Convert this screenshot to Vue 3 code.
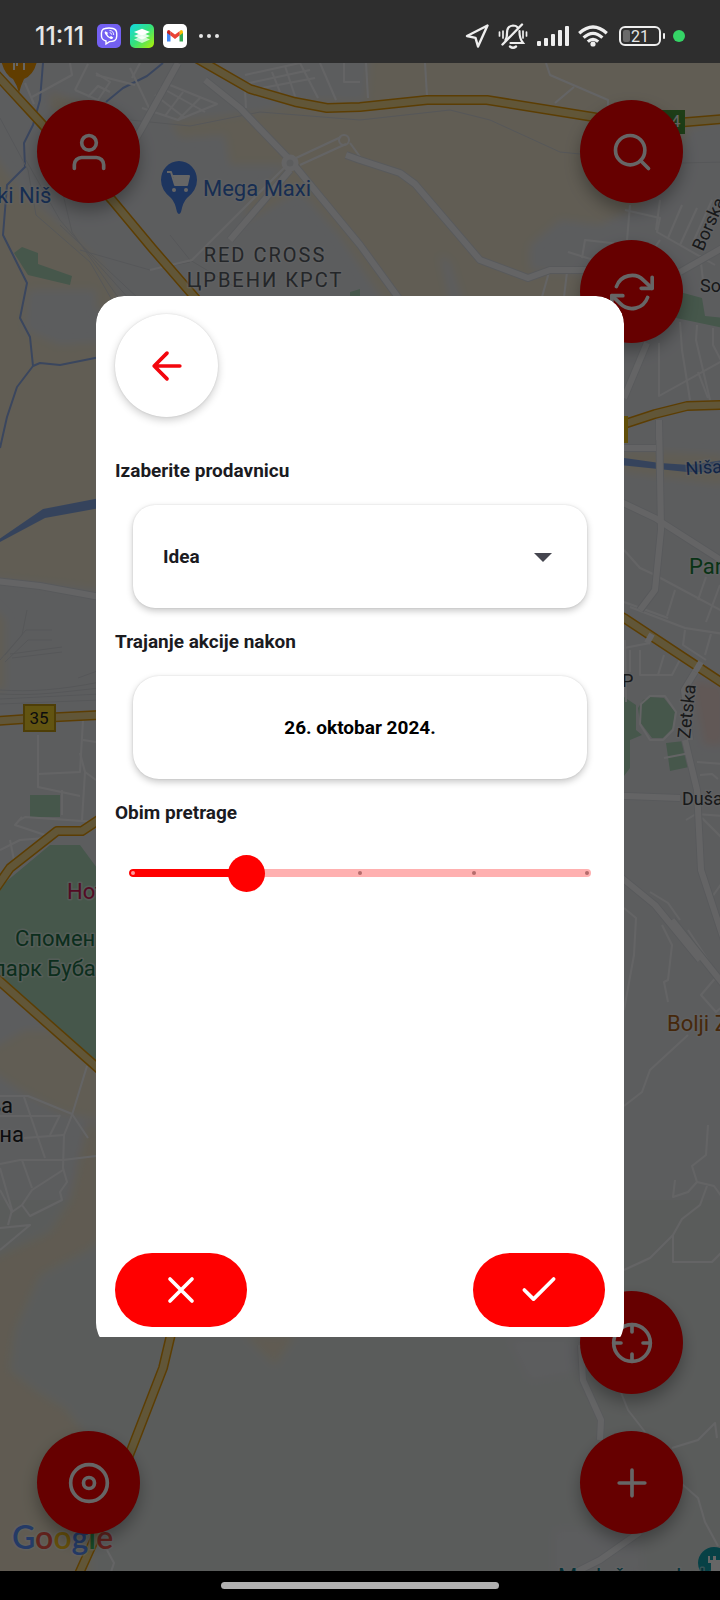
<script setup>
import { computed, ref } from 'vue'

const store = ref('Idea')
const stores = ['Idea', 'Mega Maxi', 'Roda', 'Lidl']
const range = ref(1)
const steps = 4
const fill = computed(() => ({ width: `${(range.value / steps) * 100}%` }))

const highways = [
  'M-6 72L42 124L112 200L152 248L204 308',
  'M196 58L250 89L295 102L327 108L360 107L427 100L487 100L593 117L640 126L687 122L724 119',
  'M600 432L655 414L687 406L724 405',
  'M-4 721L40 718L100 715',
  'M-4 888L10 868L57 831L82 831L100 819',
  'M-4 978L100 1070',
  'M172 1330L163 1368L132 1448L96 1536L78 1576',
]

const roads = [
  'M178 63L142 128L118 170',
  'M205 80L240 108L290 160L360 245L400 300',
  'M290 170L230 240',
  'M346 155L360 160L400 173L415 184L480 260L528 278L550 270L590 270',
  'M647 343L624 398',
  'M640 610L655 590L661 530L659 420',
  'M600 448L656 448',
  'M600 492L655 518L724 562',
  'M-4 581L40 586L100 597',
  'M600 795L680 798',
  'M685 740L697 790L701 870L724 940',
  'M695 672L684 690L690 740',
  'M600 860L655 905L700 960',
  'M672 920L724 985',
  'M581 1345L583 1380L601 1420L600 1440',
  'M640 1532L600 1560L570 1575',
  'M680 272L724 247',
]

const streets = [
  'M32 97L72 75L70 63', 'M25 83L34 104', 'M75 90L98 100L110 82L96 73', 'M88 64L75 90', 'M96 75L135 85', 'M88 97L98 86L110 92',
  'M130 68L150 110', 'M132 78L140 63', 'M165 83L217 104L178 120L142 108', 'M183 92L165 116', 'M200 98L178 120', 'M155 95L185 118', 'M160 87L205 112',
  'M245 75L300 63', 'M245 84L310 70', 'M262 88L315 78', 'M272 72L280 92', 'M285 66L295 96', 'M300 63L318 98', 'M320 63L336 100', 'M344 63L344 82L360 82', 'M366 63L368 98', 'M245 90L246 108',
  'M296 158L341 137', 'M300 165L346 144', 'M350 143L366 165', 'M284 168L192 260L150 270',
  'M425 63L427 96', 'M546 63L550 75L608 100L608 112', 'M574 87L555 103', 'M625 210L660 218L657 232L715 265', 'M660 200L656 230', 'M682 205L668 238', 'M697 208L680 245', 'M630 205L627 240', 'M712 200L694 240',
  'M582 258L585 240L620 244', 'M568 252L600 262', 'M549 272L542 297', 'M567 272L564 297', 'M700 255L703 280', 'M660 240L645 262',
  'M659 343L659 396L724 360', 'M680 322L682 350L690 400', 'M697 325L696 340L710 400', 'M713 328L713 345L724 366', 'M698 372L708 398',
  'M624 550L640 568L653 574L724 612', 'M675 590L667 616', 'M706 577L698 600', 'M624 602L668 618', 'M630 607L685 628L724 634', 'M720 585L706 622',
  'M685 630L683 645L706 660', 'M711 634L705 655', 'M624 648L650 643', 'M630 650L630 672', 'M640 650L640 675L672 675L684 652', 'M664 655L658 675', 'M625 640L626 702',
  'M697 762L724 764', 'M700 775L712 774L718 779', 'M686 820L696 814L724 816', 'M702 818L724 840', 'M712 897L724 880',
  'M624 908L636 918L634 955L624 1010', 'M662 925L672 945L668 980L664 982L668 1002', 'M688 930L718 975L701 995L716 1012L724 1005', 'M650 892L668 903L680 920',
  'M688 1035L650 1070L642 1092L624 1106', 'M708 1125L706 1155L692 1166L697 1182L714 1186L724 1200', 'M697 1182L688 1192L673 1197L675 1180', 'M707 1186L700 1205L682 1219L673 1235L650 1258L624 1270', 'M673 1235L673 1262L712 1262L724 1250',
  'M620 1390L628 1410L645 1432', 'M672 1448L698 1440L715 1423L717 1438', 'M682 1484L698 1498L705 1522L718 1546', 'M107 1550L114 1563L110 1575',
  'M38 735L38 787L80 796', 'M38 774L80 772L83 720', 'M80 753L85 772L96 780', 'M83 740L96 742', 'M62 790L62 815', 'M85 772L82 820', 'M20 820L25 817L96 822', 'M22 817L15 825L45 835', 'M0 850L20 840L45 838', 'M10 840L14 860',
  'M0 1096L28 1096L72 1114L88 1138', 'M24 1097L45 1158', 'M0 1116L60 1116', 'M60 1115L50 1135', 'M24 1138L64 1135', 'M87 1066L72 1115L64 1135L63 1168L67 1182L60 1192L62 1200L30 1216L22 1205L32 1190L63 1170', 'M0 1164L20 1160L63 1160L96 1156', 'M22 1160L32 1188', 'M0 1168L12 1210L8 1225', 'M0 1190L12 1212L22 1205', 'M0 1250L30 1225L0 1228',
]

const rails = [
  'M0 118L28 170L36 215L90 262L112 300', 'M26 160L60 220L96 262L130 300', 'M62 190L72 232L120 300', 'M80 250L150 270L190 262', 'M60 225L140 300',
  'M0 690C30 692 60 690 100 682', 'M0 694C40 696 60 692 100 688', 'M0 699L100 694', 'M0 704L100 700', 'M27 610L22 635L5 655', 'M0 660L26 630L52 630', 'M5 662L28 640L52 640', 'M10 654L62 647', 'M12 658L62 652', 'M78 678L100 670',
  'M130 120L190 126L260 112L360 120L450 110L490 120L560 152L600 156', 'M682 163L724 162', 'M170 235L190 260L240 290',
]

const fabs = {
  top: [
    { name: 'Pretraga', paths: ['M19 11a8 8 0 1 1-16 0a8 8 0 1 1 16 0', 'M21 21l-4.35-4.35'] },
    { name: 'Osveži', paths: ['M23 4v6h-6', 'M1 20v-6h6', 'M3.51 9a9 9 0 0 1 14.85-3.36L23 10M1 14l4.64 4.36A9 9 0 0 0 20.49 15'] },
  ],
  bottom: [
    { name: 'Moja lokacija', paths: ['M22 12a10 10 0 1 1-20 0a10 10 0 1 1 20 0', 'M22 12h-4M6 12H2M12 6V2M12 22v-4'] },
    { name: 'Dodaj', paths: ['M12 5v14M5 12h14'] },
  ],
}
</script>

<template>
  <div class="screen">
    <header class="status">
      <span class="clock">11:11</span>
      <svg class="app" viewBox="0 0 24 24">
        <rect width="24" height="24" rx="5" fill="#7360f2" />
        <path d="M8 4.5Q12 3.500 16 4.500Q19.500 5.500 19.700 9Q20 12 19.300 14.500Q18 17.600 12.500 17.600L9 20V17Q5 16 4.500 12.500Q4 9 5 6.500Q6 4.900 8 4.500Z" fill="none" stroke="#fff" stroke-width="1.400" />
        <path d="M8.500 7.200Q7 8 8 9.800Q10 13.500 13.800 15Q15.500 15.500 16.200 13.500L14 11.900L12.700 12.900Q10.800 12 10.200 10.100L11.100 9Z" fill="#fff" />
        <path d="M12.500 6.500Q16.500 6.700 16.700 11M12.700 8.600Q14.600 8.800 14.700 10.700" fill="none" stroke="#fff" stroke-width=".9" />
      </svg>
      <svg class="app" viewBox="0 0 24 24">
        <defs>
          <linearGradient id="layers" x1="0" y1="0" x2="1" y2="1">
            <stop offset="0" stop-color="#12d8e6" /><stop offset=".5" stop-color="#35e27a" /><stop offset="1" stop-color="#b4f000" />
          </linearGradient>
        </defs>
        <rect width="24" height="24" rx="5" fill="url(#layers)" />
        <path d="M4 15.500L12 12L20 15.500L12 19Z" fill="#fff" opacity=".7" />
        <path d="M4 12L12 8.500L20 12L12 15.500Z" fill="#fff" opacity=".85" />
        <path d="M4 8L12 4.800L20 8L12 11.500Z" fill="#fff" />
      </svg>
      <svg class="app" viewBox="0 0 24 24">
        <rect width="24" height="24" rx="5" fill="#fff" />
        <path d="M4 8v9.500h3.500V9Z" fill="#4285f4" />
        <path d="M16.500 9v8.500H20V8Z" fill="#34a853" />
        <path d="M4 8Q4 6 6 6L7.500 7.200V11.500L4 8.900Z" fill="#c5221f" />
        <path d="M16.500 7.200L18 6Q20 6 20 8V8.900L16.500 11.500Z" fill="#fbbc04" />
        <path d="M7.500 7.200L12 10.600L16.500 7.200V11.500L12 14.900L7.500 11.500Z" fill="#ea4335" />
      </svg>
      <svg class="dots" viewBox="0 0 22 6" fill="#e6e6e6"><circle cx="3" cy="3" r="2" /><circle cx="11" cy="3" r="2" /><circle cx="19" cy="3" r="2" /></svg>
      <span class="spring"></span>
      <svg class="s24" viewBox="0 0 24 24" fill="none" stroke="#eee" stroke-width="2.400" stroke-linejoin="round"><path d="M22.500 1.500L2 12L10.500 13.800L13 22.500Z" /></svg>
      <svg class="bell" viewBox="0 0 30 26" fill="none" stroke="#eee" stroke-width="2.200" stroke-linecap="round">
        <path d="M7.500 17Q9 15 9 10Q9 3 15 2.500Q18 2.500 19.500 4.200M21.500 8Q21.200 15 25 20H12.500" />
        <path d="M24 1.500L4.500 21.500M12 23.500Q15 26 18 23.500" stroke-width="2.400" />
        <path d="M1.500 9v4M5 8v7M28.500 9v4M25 8v7" stroke-width="1.700" />
      </svg>
      <svg class="signal" viewBox="0 0 32 22" fill="#eee">
        <rect y="16" width="4" height="5" rx="1" /><rect x="7" y="13" width="4" height="8" rx="1" /><rect x="14" y="9" width="4" height="12" rx="1" /><rect x="21" y="5" width="4" height="16" rx="1" /><rect x="28" y="1" width="4" height="20" rx="1" />
      </svg>
      <svg class="wifi" viewBox="0 0 30 22" fill="none" stroke="#eee" stroke-width="3.200">
        <path d="M1.200 8.200Q15-4.200 28.800 8.200M5.600 12.600Q15 4 24.400 12.600M9.800 16.600Q15 12 20.200 16.600" /><circle cx="15" cy="19" r="2.600" fill="#eee" stroke="none" />
      </svg>
      <span class="battery"><span class="level"></span>21<span class="tip"></span></span>
      <span class="live"></span>
    </header>

    <main class="stage">
      <svg class="map" viewBox="0 63 720 1508" preserveAspectRatio="xMidYMin slice">
        <defs><filter id="soft" x="-5%" y="-5%" width="110%" height="110%"><feGaussianBlur stdDeviation="4" /></filter></defs>
        <rect y="63" width="720" height="1508" fill="#e6e8ec" />
        <rect y="1200" width="720" height="371" fill="#e2e6e4" />
        <g filter="url(#soft)">
          <path d="M370 50H740V118L690 128L680 150L640 205L600 225L560 220L530 245L530 270L590 275L600 310H390L340 235L300 190L245 222L250 200L290 165L230 165L225 135L180 138L170 122L260 112L310 100L366 102Z" fill="#f2e8d2" />
          <path d="M440 255L450 262L465 310H452Z" fill="#e6e8ec" />
          <path d="M-10 150L20 190L60 225L100 262L125 310H96V290H28L25 330L60 345L100 342V590L-10 578Z" fill="#f2e8d2" />
          <path d="M50 92L120 115L120 140L50 110Z" fill="#efe4cd" />
          <path d="M25 1030L60 1030L100 1068V1120L60 1112L20 1090L-10 1070V1050Z" fill="#f2e8d2" />
          <path d="M88 1120L100 1130V1240L88 1250L40 1275L15 1330L10 1370L35 1390L65 1408L90 1440L90 1580H-10V1260L50 1232L70 1200Z" fill="#efe4cd" />
          <path d="M-10 605L5 620V690H-10Z" fill="#f2e8d2" />
          <path d="M245 1335H295L275 1365Z" fill="#efe4cd" />
          <path d="M624 450L724 455V485L624 472Z" fill="#f2e8d2" />
          <path d="M510 1340H590L585 1370L530 1380Z" fill="#e6e8ec" />
          <path d="M555 1530H640V1575H555Z" fill="#e6e8ec" />
          <path d="M692 680L724 685V745H704Z" fill="#f3dcd6" />
        </g>
        <g fill="#aed9bb">
          <path d="M14 253L22 247L38 253V264L72 276L70 285L28 275Z" />
          <path d="M-4 890L50 845H80L100 872V1068L-4 976Z" />
          <path d="M30 795H60V817H30Z" />
          <path d="M350 292L360 289V298H350ZM680 292L702 298L705 316L724 318V328L676 318Z" />
          <path d="M643 700L650 697L664 698L675 712L673 728L663 738H652L640 722L638 708Z" />
          <path d="M624 697L636 705V730L642 735L630 740V768L624 776Z" />
          <path d="M666 743L684 741L689 767L670 771Z" />
        </g>
        <g fill="none" stroke="#91aeea" stroke-width="2">
          <path d="M163 63L147 76L123 88L106 102" /><path d="M43 63L40 100L33 125L24 143L25 167L7 185L3 235L13 255L27 283L20 318L30 337L33 366L17 387L7 417L0 448" /><path d="M33 366L40 363L60 365L100 357" />
        </g>
        <path d="M-2 540L43 509L100 498V508L45 518L-2 543Z" fill="#86a9e6" />
        <path d="M610 456L660 463L690 465L724 460V472L687 472L610 464Z" fill="#86a9e6" />
        <g class="rails"><path v-for="d in rails" :key="d" :d="d" /></g>
        <g class="streets"><path v-for="d in streets" :key="d" :d="d" /></g>
        <g class="roads-edge"><path v-for="d in roads" :key="d" :d="d" /></g>
        <g class="roads"><path v-for="d in roads" :key="d" :d="d" /></g>
        <circle cx="290" cy="163" r="6" fill="#e6e8ec" stroke="#fafbfd" stroke-width="5" />
        <circle cx="344" cy="140" r="5" fill="none" stroke="#fafbfd" stroke-width="2" />
        <path d="M641 704L650 696H665L676 712L673 730L663 740H650L640 724Z" fill="none" stroke="#fafbfd" stroke-width="2" />
        <path d="M664 758L690 753" stroke="#fafbfd" stroke-width="2" />
        <g class="hw-edge"><path v-for="d in highways" :key="d" :d="d" /><path d="M600 604L624 618L724 684" /></g>
        <g class="hw"><path v-for="d in highways" :key="d" :d="d" /><path d="M600 604L624 618L724 684" /></g>
        <path d="M659 420V440M647 643L652 634M695 672L701 662" stroke="#fafbfd" stroke-width="6" />

        <path d="M0 55H38Q36 74 24 79Q21 85 19 93Q17 85 13 79Q3 74 0 55Z" fill="#f29900" />
        <path d="M14 60V70M17 60V66M24 60V70" stroke="#fff" stroke-width="2" fill="none" />
        <path d="M179 161A18.500 18.500 0 0 1 197 180Q197 190 187 198Q183 202 181 212Q179 216 177 212Q175 202 171 198Q161 190 161 180A18.500 18.500 0 0 1 179 161Z" fill="#4a84ee" />
        <path d="M167 172H171L175 185H187L189 176H173M174 180H188" fill="none" stroke="#fff" stroke-width="2" /><path d="M173 176H189L187 184H175Z" fill="#fff" /><circle cx="174" cy="190" r="2" fill="#fff" /><circle cx="186" cy="190" r="2" fill="#fff" />
        <rect x="650" y="110" width="35" height="24" fill="#4b9b3b" />
        <rect x="24" y="705" width="31" height="26" fill="#f6d32c" stroke="#c39b12" stroke-width="2" />
        <rect x="610" y="416" width="18" height="27" fill="#f0c419" />
        <circle cx="714" cy="1563" r="16" fill="#12a2b0" />
        <path d="M708 1556V1563H711V1572H724V1556H720V1560H716V1556H713V1560H710V1556Z" fill="#fff" />

        <g class="labels">
          <text x="671" y="127" fill="#fff" class="bare">4</text>
          <text x="-3" y="203" fill="#3a72cc">ki Niš</text>
          <text x="203" y="196" fill="#3a72cc">Mega Maxi</text>
          <text x="265" y="262" class="area">RED CROSS</text>
          <text x="265" y="287" class="area">ЦРВЕНИ КРСТ</text>
          <text class="small" transform="translate(703 252) rotate(-66)">Borska</text>
          <text x="700" y="292" class="small">Somborska</text>
          <text x="686" y="475" class="small water" transform="rotate(-4 686 475)">Nišava</text>
          <text x="689" y="574" fill="#188038">Park</text>
          <text x="622" y="687" class="small">P</text>
          <text class="small" transform="translate(690 739) rotate(-84)">Zetska</text>
          <text x="682" y="805" class="small">Dušanova</text>
          <text x="39" y="724" fill="#202124" class="bare" text-anchor="middle">35</text>
          <text x="67" y="899" fill="#d01c5b">Hotel</text>
          <text x="15" y="946" fill="#20734a">Спомен</text>
          <text x="-7" y="976" fill="#20734a">парк Бубањ</text>
          <text x="667" y="1031" fill="#b0651c">Bolji Zivot</text>
          <text x="13" y="1113" fill="#202124" text-anchor="end">Доња</text>
          <text x="24" y="1142" fill="#202124" text-anchor="end">Врежина</text>
          <text x="558" y="1584" fill="#12808e">Medoševac kula</text>
          <text x="12" y="1549" class="logo"><tspan fill="#5a92ff">G</tspan><tspan fill="#f5574a">o</tspan><tspan fill="#fbc41c">o</tspan><tspan fill="#5a92ff">g</tspan><tspan fill="#3dba60">l</tspan><tspan fill="#f5574a">e</tspan></text>
        </g>
      </svg>

      <div class="fabs">
        <div class="stack">
          <button class="fab" type="button" aria-label="Profil">
            <svg class="icon" viewBox="0 0 24 24"><path d="M4 21v-2a4 4 0 0 1 4-4h8a4 4 0 0 1 4 4v2" /><circle cx="12" cy="7" r="4" /></svg>
          </button>
          <button class="fab" type="button" aria-label="Fokus">
            <svg class="icon" viewBox="0 0 24 24"><circle cx="12" cy="12" r="10" /><circle cx="12" cy="12" r="3" /></svg>
          </button>
        </div>
        <div class="stack">
          <div v-for="(group, key) in fabs" :key="key" class="group">
            <button v-for="f in group" :key="f.name" class="fab" type="button" :aria-label="f.name">
              <svg class="icon" viewBox="0 0 24 24"><path v-for="d in f.paths" :key="d" :d="d" /></svg>
            </button>
          </div>
        </div>
      </div>

      <div class="scrim">
        <section class="dialog" role="dialog" aria-modal="true">
          <form class="sheet" @submit.prevent>
            <button class="back" type="button" aria-label="Nazad">
              <svg class="icon" viewBox="0 0 24 24"><path d="M19 12H5M12 19l-7-7 7-7" /></svg>
            </button>
            <label class="label" for="store">Izaberite prodavnicu</label>
            <div class="field">
              <select id="store" v-model="store" class="box select">
                <option v-for="s in stores" :key="s">{{ s }}</option>
              </select>
              <svg class="caret" viewBox="0 0 18 9"><path d="M0 0H18L9 9Z" fill="#45464f" /></svg>
            </div>
            <label class="label" for="date">Trajanje akcije nakon</label>
            <div class="field">
              <button id="date" class="box date" type="button">26. oktobar 2024.</button>
            </div>
            <label class="label" for="range">Obim pretrage</label>
            <div class="slider">
              <div class="rail">
                <div class="span"><div class="fill" :style="fill"></div></div>
                <i v-for="n in steps + 1" :key="n" class="tick" :class="{ on: n - 1 < range }"></i>
              </div>
              <input id="range" v-model.number="range" type="range" min="0" :max="steps" step="1" />
            </div>
            <div class="actions">
              <button class="pill" type="button" aria-label="Otkaži">
                <svg class="icon" viewBox="0 0 24 24"><path d="M18 6L6 18M6 6l12 12" /></svg>
              </button>
              <button class="pill" type="submit" aria-label="Potvrdi">
                <svg class="icon" viewBox="0 0 24 24"><path d="M20 6L9 17l-5-5" /></svg>
              </button>
            </div>
          </form>
        </section>
      </div>
    </main>

    <footer class="nav"><span class="handle"></span></footer>
  </div>
</template>

<style>
body { background: #000; }
</style>

<style scoped>
* { box-sizing: border-box; }
.screen { min-height: 100vh; display: flex; flex-direction: column; font-family: Roboto, "Noto Sans", sans-serif; overflow: hidden; }
button { border: 0; padding: 0; font: inherit; cursor: pointer; }

.status { height: 63px; padding: 9px 35px 0; display: flex; align-items: center; background: #2e2e2e; color: #e6e6e6; }
.clock { font-family: Inter, sans-serif; font-size: 25px; line-height: 30px; width: 62px; font-weight: 500; }
.app { width: 24px; height: 24px; margin-right: 9px; }
.dots { width: 22px; height: 6px; margin-left: 2px; }
.spring { flex: 1; }
.s24 { width: 24px; height: 24px; margin-right: 9px; }
.bell { width: 30px; height: 26px; margin-right: 9px; }
.signal { width: 32px; height: 22px; margin-right: 9px; }
.wifi { width: 30px; height: 22px; margin-right: 11px; }
.battery { position: relative; width: 42px; height: 20px; border: 2px solid #eee; border-radius: 6px; font-size: 16px; line-height: 17px; text-align: center; margin-right: 12px; }
.level { position: absolute; left: 2px; top: 2px; bottom: 2px; width: 7px; border-radius: 2px; background: #6a6a6a; }
.tip { position: absolute; right: -6px; top: 5px; width: 2px; height: 6px; border-radius: 2px; background: #eee; }
.live { width: 12px; height: 12px; border-radius: 50%; background: #35d466; }

.stage { position: relative; flex: 1; display: flex; overflow: hidden; }
.map { position: absolute; inset: 0; width: 100%; height: 100%; }
.map path { stroke-linejoin: round; }
.rails path { fill: none; stroke: #d6d9dd; stroke-width: 1; }
.streets path { fill: none; stroke: #fafbfd; stroke-width: 2; }
.roads-edge path { fill: none; stroke: #dcdfe4; stroke-width: 8; }
.roads path { fill: none; stroke: #fafbfd; stroke-width: 6; }
.hw-edge path { fill: none; stroke: #e59a08; stroke-width: 10; }
.hw path { fill: none; stroke: #f3d88c; stroke-width: 7; }
.labels text { font-size: 22px; paint-order: stroke; stroke: #f4f6f8; stroke-opacity: .5; stroke-width: 3; stroke-linejoin: round; }
.labels .small { font-size: 18px; fill: #3c4043; }
.labels .water { fill: #2c5cb0; }
.labels .bare { font-size: 17px; stroke: none; }
.labels .area { font-size: 20px; letter-spacing: 2px; text-anchor: middle; fill: #5a5f66; }
.labels .logo { font-family: Lato, sans-serif; font-size: 32px; font-weight: 600; }

.fabs { position: relative; flex: 1; display: flex; justify-content: space-between; padding: 37px; }
.stack { display: flex; flex-direction: column; justify-content: space-between; }
.group { display: flex; flex-direction: column; gap: 37px; }
.fab, .back { width: 103px; height: 103px; border-radius: 50%; display: grid; place-items: center; }
.fab { background: #f00; color: #fff; box-shadow: 0 8px 16px rgba(0, 0, 0, .3); }
.icon { width: 44px; height: 44px; fill: none; stroke: currentColor; stroke-width: 2; stroke-linecap: round; stroke-linejoin: round; }

.scrim { position: absolute; inset: 0; padding: 233px 96px 234px; display: flex; background: rgba(0, 0, 0, .6); }
.dialog { flex: 1; overflow: hidden; display: flex; border-radius: 28px 28px 0 0; }
.sheet { flex: 1; margin-bottom: -14px; padding: 18px 19px 24px; display: flex; flex-direction: column; background: #fff; border-radius: 28px; color: #1b1b1f; font-size: 19px; font-weight: 700; }
.back { background: #fff; color: #f3060d; margin-bottom: 20px; box-shadow: 0 3px 8px rgba(0, 0, 0, .2), 0 0 2px rgba(0, 0, 0, .12); }
.label { line-height: 68px; }
.field { position: relative; margin: 0 18px; display: flex; }
.box { width: 100%; height: 103px; border: 0; border-radius: 22px; background: #fff; font: inherit; box-shadow: 0 3px 7px rgba(0, 0, 0, .22), 0 0 2px rgba(0, 0, 0, .12); }
.select { appearance: none; padding: 0 30px; color: #1b1b1f; }
.caret { position: absolute; right: 35px; top: 48px; width: 18px; height: 9px; pointer-events: none; }
.date { color: #000; border-radius: 26px; }
.slider { position: relative; height: 52px; display: flex; align-items: center; }
.rail { position: absolute; left: 14px; right: 14px; height: 8px; padding: 0 4px; border-radius: 4px; background: #ffb0b0; display: flex; justify-content: space-between; align-items: center; }
.span { position: absolute; left: 0; right: 4px; top: 0; bottom: 0; border-radius: 4px; overflow: hidden; }
.fill { height: 100%; border-radius: 4px; background: #f00; }
.tick { position: relative; width: 4px; height: 4px; margin: 0 -2px; border-radius: 50%; background: #b56c6c; }
.tick.on { background: #ff9a9a; }
.slider input { position: relative; width: 100%; height: 36px; margin: 0; appearance: none; background: transparent; }
.slider input::-webkit-slider-thumb { appearance: none; width: 37px; height: 37px; border-radius: 50%; background: #f00; }
.actions { margin-top: auto; display: flex; justify-content: space-between; }
.pill { width: 132px; height: 74px; border-radius: 37px; background: #f00; color: #fff; display: grid; place-items: center; }

.nav { height: 29px; background: #000; display: grid; place-items: center; }
.handle { width: 278px; height: 7px; border-radius: 4px; background: #b0b0b0; }
</style>
